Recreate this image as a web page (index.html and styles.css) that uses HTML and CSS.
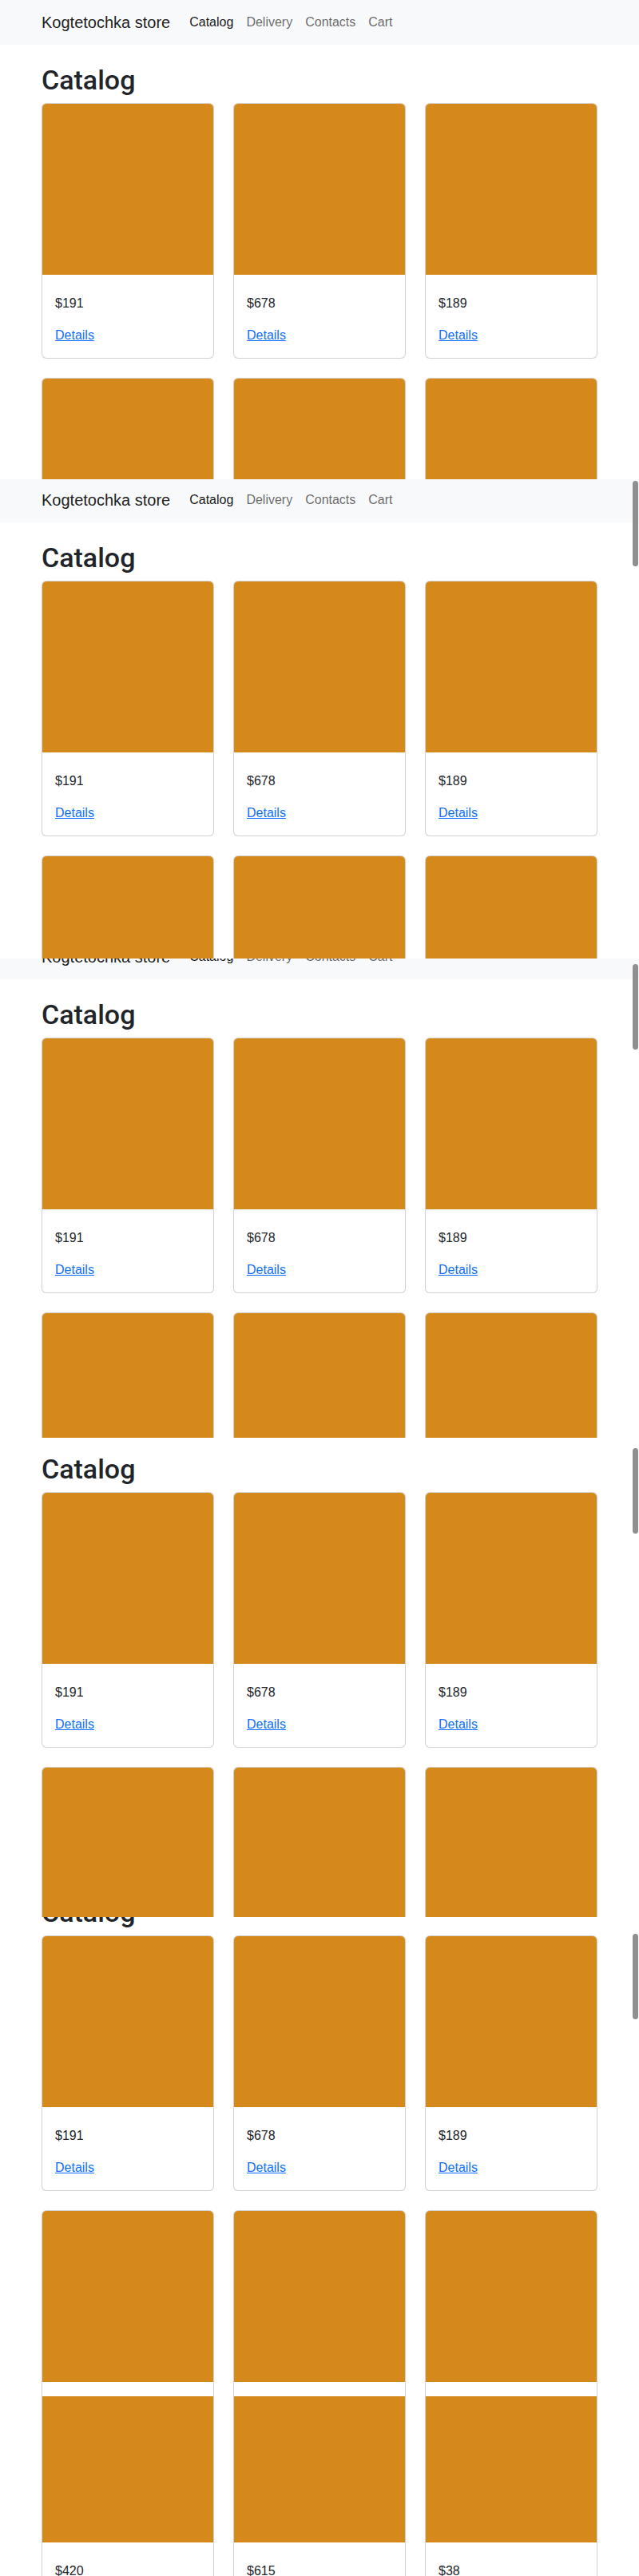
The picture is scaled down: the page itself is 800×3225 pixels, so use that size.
FILE: index.html
```html
<!DOCTYPE html>
<html lang="en">
<head>
<meta charset="utf-8">
<title>Kogtetochka store — Catalog</title>
<link rel="stylesheet" href="styles.css">
</head>
<body>

<div class="shot">
  <div class="page">
    <nav class="navbar"><div class="wrap nav-inner"><a class="brand" href="#">Kogtetochka store</a><ul class="nav"><li><a class="nav-link active" href="#">Catalog</a></li><li><a class="nav-link" href="#">Delivery</a></li><li><a class="nav-link" href="#">Contacts</a></li><li><a class="nav-link" href="#">Cart</a></li></ul></div></nav>
    <main class="wrap content">
      <h1 class="title">Catalog</h1>
      <div class="grid">
        <div class="card"><div class="card-img"></div><div class="card-body"><p class="price">$191</p><a class="details" href="#">Details</a></div></div>
        <div class="card"><div class="card-img"></div><div class="card-body"><p class="price">$678</p><a class="details" href="#">Details</a></div></div>
        <div class="card"><div class="card-img"></div><div class="card-body"><p class="price">$189</p><a class="details" href="#">Details</a></div></div>
        <div class="card"><div class="card-img"></div><div class="card-body"><p class="price">$420</p><a class="details" href="#">Details</a></div></div>
        <div class="card"><div class="card-img"></div><div class="card-body"><p class="price">$615</p><a class="details" href="#">Details</a></div></div>
        <div class="card"><div class="card-img"></div><div class="card-body"><p class="price">$38</p><a class="details" href="#">Details</a></div></div>
      </div>
    </main>
  </div>
</div>

<div class="shot s2">
  <div class="page">
    <nav class="navbar"><div class="wrap nav-inner"><a class="brand" href="#">Kogtetochka store</a><ul class="nav"><li><a class="nav-link active" href="#">Catalog</a></li><li><a class="nav-link" href="#">Delivery</a></li><li><a class="nav-link" href="#">Contacts</a></li><li><a class="nav-link" href="#">Cart</a></li></ul></div></nav>
    <main class="wrap content">
      <h1 class="title">Catalog</h1>
      <div class="grid">
        <div class="card"><div class="card-img"></div><div class="card-body"><p class="price">$191</p><a class="details" href="#">Details</a></div></div>
        <div class="card"><div class="card-img"></div><div class="card-body"><p class="price">$678</p><a class="details" href="#">Details</a></div></div>
        <div class="card"><div class="card-img"></div><div class="card-body"><p class="price">$189</p><a class="details" href="#">Details</a></div></div>
        <div class="card"><div class="card-img"></div><div class="card-body"><p class="price">$420</p><a class="details" href="#">Details</a></div></div>
        <div class="card"><div class="card-img"></div><div class="card-body"><p class="price">$615</p><a class="details" href="#">Details</a></div></div>
        <div class="card"><div class="card-img"></div><div class="card-body"><p class="price">$38</p><a class="details" href="#">Details</a></div></div>
      </div>
    </main>
  </div>
  <div class="thumb"></div>
</div>

<div class="shot s3">
  <div class="page">
    <nav class="navbar"><div class="wrap nav-inner"><a class="brand" href="#">Kogtetochka store</a><ul class="nav"><li><a class="nav-link active" href="#">Catalog</a></li><li><a class="nav-link" href="#">Delivery</a></li><li><a class="nav-link" href="#">Contacts</a></li><li><a class="nav-link" href="#">Cart</a></li></ul></div></nav>
    <main class="wrap content">
      <h1 class="title">Catalog</h1>
      <div class="grid">
        <div class="card"><div class="card-img"></div><div class="card-body"><p class="price">$191</p><a class="details" href="#">Details</a></div></div>
        <div class="card"><div class="card-img"></div><div class="card-body"><p class="price">$678</p><a class="details" href="#">Details</a></div></div>
        <div class="card"><div class="card-img"></div><div class="card-body"><p class="price">$189</p><a class="details" href="#">Details</a></div></div>
        <div class="card"><div class="card-img"></div><div class="card-body"><p class="price">$420</p><a class="details" href="#">Details</a></div></div>
        <div class="card"><div class="card-img"></div><div class="card-body"><p class="price">$615</p><a class="details" href="#">Details</a></div></div>
        <div class="card"><div class="card-img"></div><div class="card-body"><p class="price">$38</p><a class="details" href="#">Details</a></div></div>
      </div>
    </main>
  </div>
  <div class="thumb"></div>
</div>

<div class="shot s4">
  <div class="page">
    <nav class="navbar"><div class="wrap nav-inner"><a class="brand" href="#">Kogtetochka store</a><ul class="nav"><li><a class="nav-link active" href="#">Catalog</a></li><li><a class="nav-link" href="#">Delivery</a></li><li><a class="nav-link" href="#">Contacts</a></li><li><a class="nav-link" href="#">Cart</a></li></ul></div></nav>
    <main class="wrap content">
      <h1 class="title">Catalog</h1>
      <div class="grid">
        <div class="card"><div class="card-img"></div><div class="card-body"><p class="price">$191</p><a class="details" href="#">Details</a></div></div>
        <div class="card"><div class="card-img"></div><div class="card-body"><p class="price">$678</p><a class="details" href="#">Details</a></div></div>
        <div class="card"><div class="card-img"></div><div class="card-body"><p class="price">$189</p><a class="details" href="#">Details</a></div></div>
        <div class="card"><div class="card-img"></div><div class="card-body"><p class="price">$420</p><a class="details" href="#">Details</a></div></div>
        <div class="card"><div class="card-img"></div><div class="card-body"><p class="price">$615</p><a class="details" href="#">Details</a></div></div>
        <div class="card"><div class="card-img"></div><div class="card-body"><p class="price">$38</p><a class="details" href="#">Details</a></div></div>
      </div>
    </main>
  </div>
  <div class="thumb"></div>
</div>

<div class="shot s5">
  <div class="page">
    <nav class="navbar"><div class="wrap nav-inner"><a class="brand" href="#">Kogtetochka store</a><ul class="nav"><li><a class="nav-link active" href="#">Catalog</a></li><li><a class="nav-link" href="#">Delivery</a></li><li><a class="nav-link" href="#">Contacts</a></li><li><a class="nav-link" href="#">Cart</a></li></ul></div></nav>
    <main class="wrap content">
      <h1 class="title">Catalog</h1>
      <div class="grid">
        <div class="card"><div class="card-img"></div><div class="card-body"><p class="price">$191</p><a class="details" href="#">Details</a></div></div>
        <div class="card"><div class="card-img"></div><div class="card-body"><p class="price">$678</p><a class="details" href="#">Details</a></div></div>
        <div class="card"><div class="card-img"></div><div class="card-body"><p class="price">$189</p><a class="details" href="#">Details</a></div></div>
        <div class="card"><div class="card-img"></div><div class="card-body"><p class="price">$420</p><a class="details" href="#">Details</a></div></div>
        <div class="card"><div class="card-img"></div><div class="card-body"><p class="price">$615</p><a class="details" href="#">Details</a></div></div>
        <div class="card"><div class="card-img"></div><div class="card-body"><p class="price">$38</p><a class="details" href="#">Details</a></div></div>
      </div>
    </main>
  </div>
  <div class="thumb"></div>
</div>

<div class="shot s6">
  <div class="page">
    <nav class="navbar"><div class="wrap nav-inner"><a class="brand" href="#">Kogtetochka store</a><ul class="nav"><li><a class="nav-link active" href="#">Catalog</a></li><li><a class="nav-link" href="#">Delivery</a></li><li><a class="nav-link" href="#">Contacts</a></li><li><a class="nav-link" href="#">Cart</a></li></ul></div></nav>
    <main class="wrap content">
      <h1 class="title">Catalog</h1>
      <div class="grid">
        <div class="card"><div class="card-img"></div><div class="card-body"><p class="price">$191</p><a class="details" href="#">Details</a></div></div>
        <div class="card"><div class="card-img"></div><div class="card-body"><p class="price">$678</p><a class="details" href="#">Details</a></div></div>
        <div class="card"><div class="card-img"></div><div class="card-body"><p class="price">$189</p><a class="details" href="#">Details</a></div></div>
        <div class="card"><div class="card-img"></div><div class="card-body"><p class="price">$420</p><a class="details" href="#">Details</a></div></div>
        <div class="card"><div class="card-img"></div><div class="card-body"><p class="price">$615</p><a class="details" href="#">Details</a></div></div>
        <div class="card"><div class="card-img"></div><div class="card-body"><p class="price">$38</p><a class="details" href="#">Details</a></div></div>
      </div>
    </main>
  </div>
</div>

</body>
</html>
```

FILE: styles.css
```css
* { box-sizing: border-box; }

html, body {
  margin: 0;
  padding: 0;
  background: #fff;
}

body {
  font-family: "Liberation Sans", Arial, sans-serif;
  font-size: 16px;
  line-height: 24px;
  color: #212529;
}

/* each captured viewport of the page */
.shot {
  position: relative;
  height: 600px;
  overflow: hidden;
  background: #fff;
}
.s6 { height: 225px; }

/* scroll position of each capture */
.s2 .page { margin-top: -2px; }
.s3 .page { margin-top: -30px; }
.s4 .page { margin-top: -61px; }
.s5 .page { margin-top: -106px; }
.s6 .page { margin-top: -505px; }

/* overlay scrollbar thumb */
.thumb {
  position: absolute;
  right: 1px;
  width: 7px;
  height: 107px;
  border-radius: 4px;
  background: #8f8f8f;
}
.s2 .thumb { top: 2px; }
.s3 .thumb { top: 7px; }
.s4 .thumb { top: 13px; }
.s5 .thumb { top: 21px; }

/* layout */
.wrap {
  width: 720px;
  margin: 0 auto;
  padding: 0 12px;
}

.navbar {
  background: #f8f9fa;
  padding: 8px 0;
}
.nav-inner {
  display: flex;
  align-items: center;
}
.brand {
  font-size: 20px;
  line-height: 30px;
  padding: 5px 0;
  margin-right: 16px;
  color: rgba(0, 0, 0, 0.9);
  text-decoration: none;
}
.nav {
  display: flex;
  list-style: none;
  margin: 0;
  padding: 0;
}
.nav-link {
  display: block;
  padding: 8px;
  line-height: 24px;
  color: rgba(0, 0, 0, 0.6);
  text-decoration: none;
}
.nav-link.active { color: rgba(0, 0, 0, 0.92); }

.content { padding-top: 24px; }

.title {
  margin: 0 0 8px;
  font-family: Roboto, "Liberation Sans", Arial, sans-serif;
  font-size: 34px;
  line-height: 40.8px;
  font-weight: 500;
  color: #212529;
}

.grid {
  display: grid;
  grid-template-columns: repeat(3, 1fr);
  column-gap: 24px;
  row-gap: 24px;
}

.card {
  border: 1px solid rgba(0, 0, 0, 0.175);
  border-radius: 6px;
  overflow: hidden;
  background: #fff;
}
.card-img {
  height: 214px;
  background: #d5891a;
}
.card-body {
  padding: 24px 16px 16px;
}
.price {
  margin: 0 0 16px;
}
.details {
  display: block;
  color: #0d6efd;
  text-decoration: underline;
}
```
